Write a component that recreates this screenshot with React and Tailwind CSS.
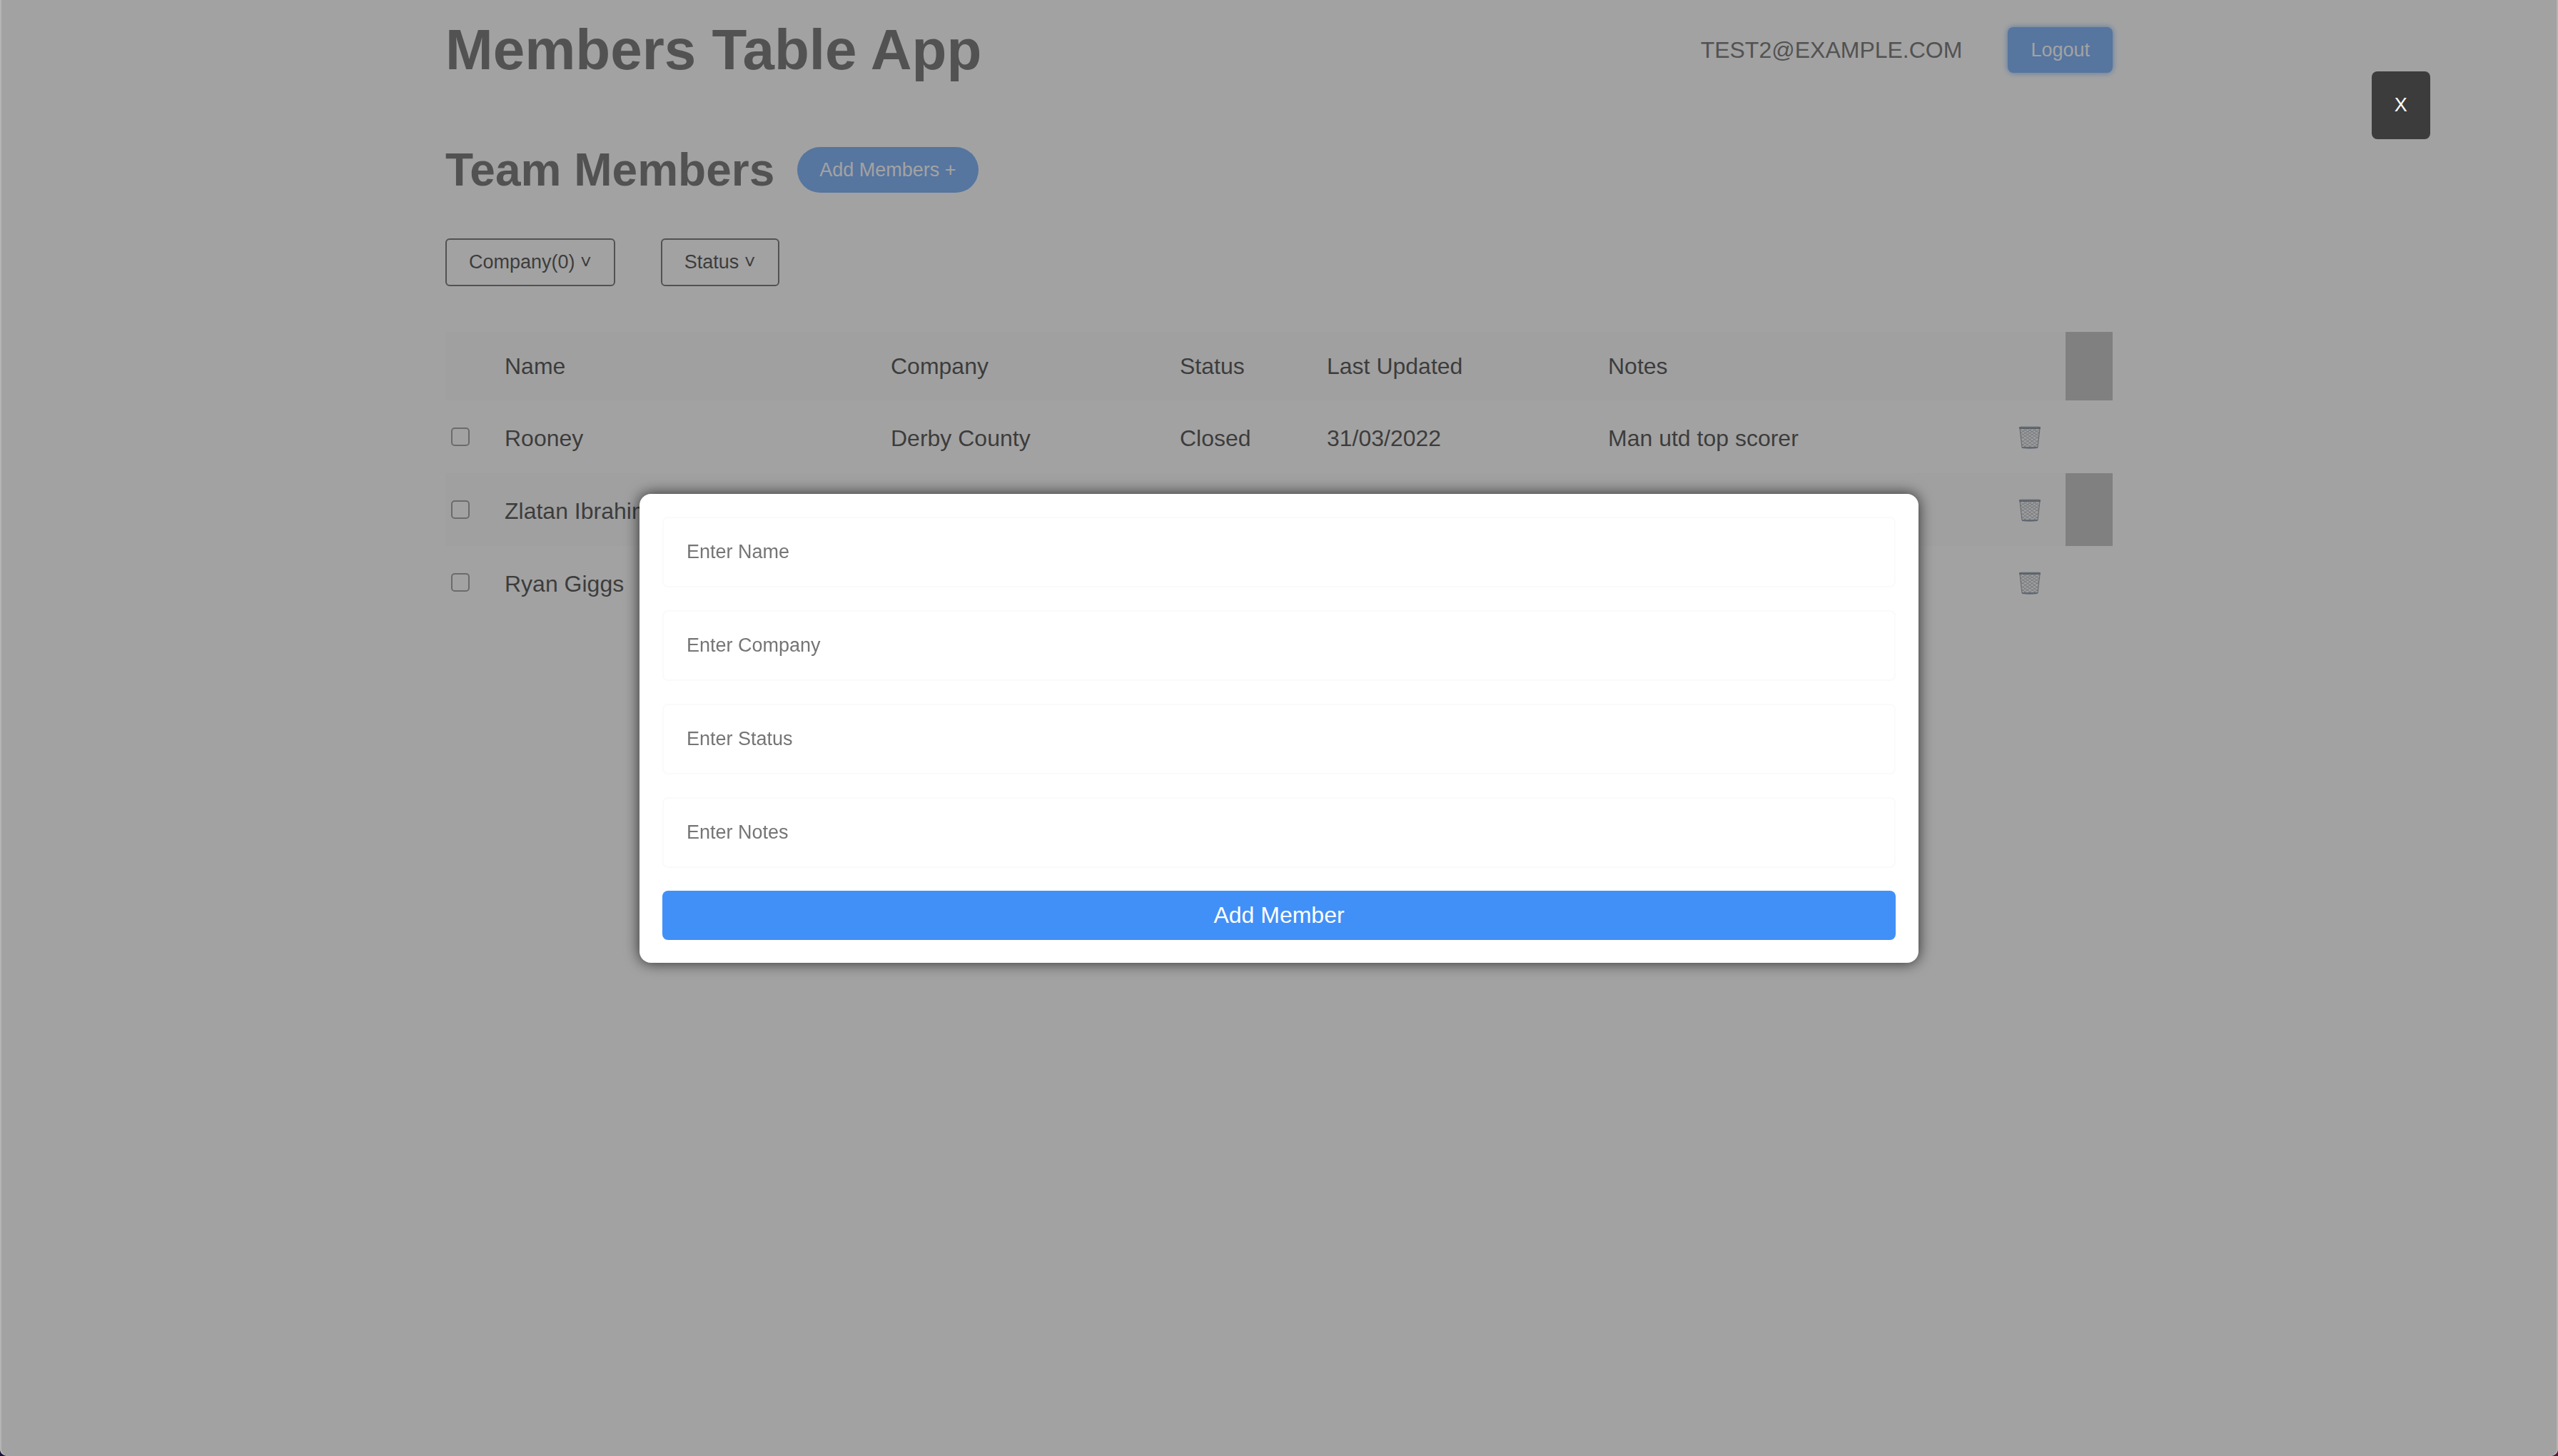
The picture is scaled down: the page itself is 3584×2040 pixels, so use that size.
import React from "react";

const members = [
  { name: "Rooney", company: "Derby County", status: "Closed", updated: "31/03/2022", notes: "Man utd top scorer" },
  { name: "Zlatan Ibrahimovic", company: "AC Milan", status: "Active", updated: "31/03/2022", notes: "Striker" },
  { name: "Ryan Giggs", company: "Wales", status: "Closed", updated: "31/03/2022", notes: "Winger" },
];

const fields = ["Name", "Company", "Status", "Notes"];

function TrashIcon() {
  return (
    <svg viewBox="0 0 32 32" className="block size-8" fill="none" aria-hidden="true">
      <path d="M2 3 L5 30 H27 L30 3 Z" fill="#f0f2f6" />
      <g stroke="#84878e" strokeWidth="0.8">
        <path d="M3 9 L27 27 M2 4 L28 23 M7 4 L29 18 M13 4 L29 14 M20 4 L30 10 M3 14 L24 29 M4 20 L17 29 M5 25 L10 29" />
        <path d="M29 9 L5 27 M30 4 L4 23 M25 4 L3 18 M19 4 L3 14 M12 4 L2 10 M29 14 L8 29 M28 20 L15 29 M27 25 L22 29" />
      </g>
      <path d="M2 3 L5 30 M30 3 L27 30" stroke="#74787f" strokeWidth="1.2" />
      <path d="M5 29 H27 V31 Q16 32.5 5 31 Z" fill="#5c6c8c" />
      <rect x="1" y="1" width="30" height="3" rx="1" fill="#50606e" />
      <path d="M3 1 H29" stroke="#8ca0b0" strokeWidth="1" />
    </svg>
  );
}

function Header() {
  return (
    <header className="flex items-center justify-between pt-6">
      <h1 className="text-[80px] leading-[92px] font-bold">Members Table App</h1>
      <div className="flex items-center gap-16">
        <p className="text-[32px] leading-9 uppercase">test2@example.com</p>
        <button className="h-16 rounded-lg bg-[#4190f7] px-8 text-[27px] text-white shadow-[0_0_8px_#4190f7]">
          Logout
        </button>
      </div>
    </header>
  );
}

function MembersTable() {
  return (
    <table className="mt-16 w-full table-fixed text-left text-[32px] leading-9 text-black">
      <colgroup>
        <col className="w-[51px]" />
        <col className="w-[541px]" />
        <col className="w-[405px]" />
        <col className="w-[206px]" />
        <col className="w-[394px]" />
        <col className="w-[571px]" />
        <col className="w-[102px]" />
        <col className="w-[66px]" />
      </colgroup>
      <thead>
        <tr className="h-24 bg-[#fafafa]">
          <td />
          {["Name", "Company", "Status", "Last Updated", "Notes"].map((h) => (
            <th key={h} scope="col" className="px-8 font-normal whitespace-nowrap">
              {h}
            </th>
          ))}
          <td />
          <td className="bg-[#aaaaaa]" />
        </tr>
      </thead>
      <tbody>
        {members.map((m) => (
          <tr key={m.name} className="group h-[102px] even:bg-[#fafafa]">
            <td className="pl-2">
              <input
                type="checkbox"
                aria-label={`Select ${m.name}`}
                className="block size-[26px] appearance-none rounded-[5px] border-2 border-[#767676] bg-white"
              />
            </td>
            <td className="px-8 pt-1 whitespace-nowrap">{m.name}</td>
            <td className="px-8 pt-1 whitespace-nowrap">{m.company}</td>
            <td className="px-8 pt-1 whitespace-nowrap">{m.status}</td>
            <td className="px-8 pt-1 whitespace-nowrap">{m.updated}</td>
            <td className="px-8 pt-1 whitespace-nowrap">{m.notes}</td>
            <td className="pt-0.5 pl-9">
              <button aria-label={`Delete ${m.name}`} className="block">
                <TrashIcon />
              </button>
            </td>
            <td className="group-even:bg-[#aaaaaa]" />
          </tr>
        ))}
      </tbody>
    </table>
  );
}

function AddMemberModal() {
  return (
    <div className="fixed inset-0 flex items-center justify-center rounded-b-[10px] bg-[rgba(100,100,100,0.6)] shadow-[inset_2px_0_0_rgba(255,255,255,0.2),inset_-2px_0_0_rgba(255,255,255,0.2)]">
      <button className="absolute top-[100px] right-[5%] h-[95px] w-[82px] rounded-lg bg-[#3c3c3c] text-[27px] text-white">
        X
      </button>
      <form
        onSubmit={(e) => e.preventDefault()}
        className="flex w-1/2 flex-col gap-8 rounded-2xl bg-white p-8 shadow-[0_0_20px_rgba(0,0,0,0.75)]"
      >
        {fields.map((f) => (
          <input
            key={f}
            type="text"
            aria-label={f}
            placeholder={`Enter ${f}`}
            className="h-[99px] rounded-lg border-2 border-[#fafafa] px-8 text-[27px] text-black placeholder:text-[#757575]"
          />
        ))}
        <button className="h-[69px] rounded-lg bg-[#4190f7] text-[32px] leading-9 text-white">Add Member</button>
      </form>
    </div>
  );
}

export default function App() {
  return (
    <div className="min-h-screen bg-linear-to-r from-[#1c1238] to-[#5a1040] font-['Liberation_Sans',Arial,sans-serif] text-[#373737]">
      <div className="min-h-screen rounded-b-[10px] bg-white">
        <div className="mx-auto max-w-[2400px] px-8">
          <Header />
          <main>
            <div className="mt-[84px] flex items-center gap-8">
              <h2 className="text-[64px] leading-[76px] font-bold">Team Members</h2>
              <button className="h-16 rounded-full bg-[#4190f7] px-[31px] text-[27px] text-white">Add Members +</button>
            </div>
            <div className="mt-[58px] flex gap-16">
              <button className="h-[67px] rounded-md border-2 border-[#373737] px-[31px] text-[27px] text-black">
                Company(0) ˅
              </button>
              <button className="h-[67px] rounded-md border-2 border-[#373737] px-[31px] text-[27px] text-black">
                Status ˅
              </button>
            </div>
            <MembersTable />
          </main>
        </div>
      </div>
      <AddMemberModal />
    </div>
  );
}
